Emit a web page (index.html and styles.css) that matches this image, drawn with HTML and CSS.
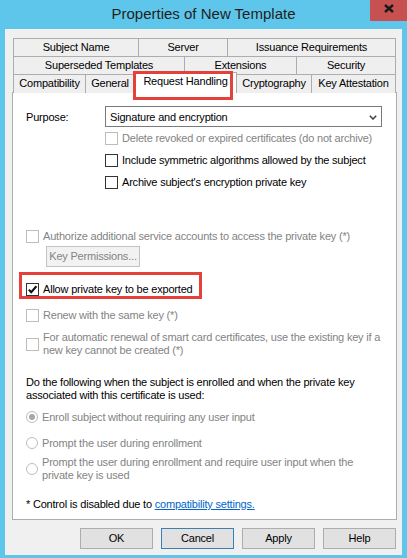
FILE: index.html
```html
<!DOCTYPE html>
<html>
<head>
<meta charset="utf-8">
<link rel="stylesheet" href="styles.css">
</head>
<body>
<div class="window">
  <div class="titlebar">
    <div class="title">Properties of New Template</div>
    <div class="close">
      <svg width="10" height="9" viewBox="0 0 10 9"><path d="M1 1 L9 8 M9 1 L1 8" stroke="#1a1a1a" stroke-width="2.4" fill="none"/></svg>
    </div>
  </div>
  <div class="dialog">
    <div class="tabs">
      <div class="tabrow">
        <div class="tab t-subject">Subject Name</div>
        <div class="tab t-server">Server</div>
        <div class="tab t-issuance">Issuance Requirements</div>
      </div>
      <div class="tabrow">
        <div class="tab t-superseded">Superseded Templates</div>
        <div class="tab t-extensions">Extensions</div>
        <div class="tab t-security">Security</div>
      </div>
      <div class="tabrow">
        <div class="tab t-compat">Compatibility</div>
        <div class="tab t-general">General</div>
        <div class="tab t-request selected">Request Handling</div>
        <div class="tab t-crypto">Cryptography</div>
        <div class="tab t-attest">Key Attestation</div>
      </div>
    </div>
    <div class="panel">
      <div class="purpose">
        <div class="label">Purpose:</div>
        <div class="select">
          <span>Signature and encryption</span>
          <svg width="8" height="5" viewBox="0 0 8 5"><path d="M0.8 0.8 L4 4 L7.2 0.8" stroke="#3c3c3c" stroke-width="1.5" fill="none"/></svg>
        </div>
      </div>
      <div class="opts">
        <div class="chk disabled"><span class="box"></span>Delete revoked or expired certificates (do not archive)</div>
        <div class="chk"><span class="box"></span>Include symmetric algorithms allowed by the subject</div>
        <div class="chk"><span class="box"></span>Archive subject's encryption private key</div>
      </div>
      <div class="line disabled authorize"><span class="box"></span>Authorize additional service accounts to access the private key (*)</div>
      <div class="keyperm">Key Permissions...</div>
      <div class="line allow"><span class="box checked"><svg width="11" height="11" viewBox="0 0 11 11"><path d="M1.8 5.6 L4.2 8.2 L9.4 2.2" stroke="#111" stroke-width="2.1" fill="none"/></svg></span>Allow private key to be exported</div>
      <div class="line disabled renew"><span class="box"></span>Renew with the same key (*)</div>
      <div class="multi disabled auto"><span class="box"></span><span class="txt">For automatic renewal of smart card certificates, use the existing key if a<br>new key cannot be created (*)</span></div>
      <div class="para">Do the following when the subject is enrolled and when the private key<br>associated with this certificate is used:</div>
      <div class="line disabled r1"><span class="radio on"></span>Enroll subject without requiring any user input</div>
      <div class="line disabled r2"><span class="radio"></span>Prompt the user during enrollment</div>
      <div class="multi disabled r3"><span class="radio"></span><span class="txt">Prompt the user during enrollment and require user input when the<br>private key is used</span></div>
      <div class="line note">* Control is disabled due to&nbsp;<a class="link">compatibility settings.</a></div>
    </div>
    <div class="buttons">
      <div class="btn">OK</div>
      <div class="btn default">Cancel</div>
      <div class="btn">Apply</div>
      <div class="btn">Help</div>
    </div>
    <div class="mark mark-tab"></div>
    <div class="mark mark-export"></div>
  </div>
</div>
</body>
</html>
```
FILE: styles.css
```css
* { box-sizing: border-box; }
html, body { margin: 0; padding: 0; }
body {
  width: 407px;
  height: 558px;
  overflow: hidden;
  background: #5ec6ea;
  font-family: "Liberation Sans", Arial, sans-serif;
  font-size: 11px;
  letter-spacing: -0.2px;
  color: #000;
}
.window { height: 558px; display: flex; flex-direction: column; }
.titlebar {
  height: 29px;
  display: grid;
  grid-template-columns: 1fr auto 1fr;
  align-items: start;
}
.title {
  grid-column: 2;
  font-size: 15px;
  letter-spacing: 0;
  line-height: 27px;
  color: #1e1e1e;
  white-space: nowrap;
}
.close {
  grid-column: 3;
  justify-self: end;
  width: 37px;
  height: 21px;
  background: #c75050;
  display: flex;
  justify-content: center;
  align-items: flex-start;
  padding-top: 4px;
  padding-left: 1px;
}
.close svg { display: block; }
.dialog {
  margin: 0 5px;
  height: 526px;
  background: #f0f0f0;
  position: relative;
  padding: 9px 0 0 7px;
}
.tabs { margin-left: 1px; width: 383px; }
.tabrow { display: flex; height: 18px; }
.tab {
  height: 19px;
  border: 1px solid #adadad;
  border-bottom: none;
  margin-left: -1px;
  background: #efefef;
  text-align: center;
  line-height: 17px;
  white-space: nowrap;
}
.tab:first-child { margin-left: 0; }
.t-subject { width: 126px; }
.t-server { width: 90px; }
.t-issuance { width: 169px; }
.t-superseded { width: 172px; }
.t-extensions { width: 113px; }
.t-security { width: 100px; }
.t-compat { width: 73px; }
.t-general { width: 50px; }
.t-request { width: 103px; }
.t-crypto { width: 76px; }
.t-attest { width: 85px; }
.tab.selected {
  position: relative;
  z-index: 2;
  height: 21px;
  margin-top: -2px;
  background: #fff;
  line-height: 17px;
}
.panel {
  width: 385px;
  height: 428px;
  border: 1px solid #adadad;
  background: #fff;
  padding: 0 0 0 13px;
}
.purpose {
  display: flex;
  align-items: center;
  height: 21px;
  margin-top: 13px;
}
.purpose .label { width: 79px; }
.select {
  width: 277px;
  height: 21px;
  border: 1px solid #7a7a7a;
  display: flex;
  align-items: center;
  justify-content: space-between;
  padding: 0 4px 0 4px;
}
.select svg { display: block; margin-top: 1px; }
.opts { margin-left: 79px; }
.chk, .line {
  display: flex;
  align-items: center;
  white-space: nowrap;
}
.chk { height: 22px; }
.line { height: 16px; }
.multi {
  display: flex;
  align-items: center;
  white-space: nowrap;
  line-height: 13px;
}
.box {
  flex: none;
  width: 13px;
  height: 13px;
  border: 1px solid #333;
  background: #fff;
  margin-right: 4px;
  display: flex;
  align-items: center;
  justify-content: center;
}
.box svg { display: block; }
.radio {
  flex: none;
  width: 12px;
  height: 12px;
  border: 1px solid #bcbcbc;
  border-radius: 50%;
  background: #fff;
  margin-right: 4px;
  display: flex;
  align-items: center;
  justify-content: center;
}
.radio.on::after {
  content: "";
  width: 6px;
  height: 6px;
  border-radius: 50%;
  background: #a8a8a8;
}
.disabled { color: #838383; }
.disabled .box { border-color: #bcbcbc; }
.authorize { margin-top: 35px; }
.keyperm {
  margin: 2px 0 0 20px;
  width: 94px;
  height: 21px;
  border: 1px solid #c2c2c2;
  background: #f2f2f2;
  color: #838383;
  text-align: center;
  line-height: 19px;
}
.allow { margin-top: 14px; }
.renew { margin-top: 10px; }
.auto { margin-top: 8px; }
.para { margin-top: 19px; line-height: 13px; white-space: nowrap; }
.r1 { margin-top: 7px; }
.r2 { margin-top: 10px; }
.r3 { margin-top: 5px; }
.note { margin-top: 14px; }
.link { color: #0066cc; text-decoration: underline; }
.buttons {
  display: flex;
  justify-content: flex-end;
  gap: 8px;
  margin-top: 8px;
  padding-right: 6px;
}
.btn {
  width: 73px;
  height: 21px;
  border: 1px solid #adadad;
  background: #e1e1e1;
  text-align: center;
  line-height: 19px;
}
.btn.default { border-color: #3c7fb1; }
.mark {
  position: absolute;
  border: 3px solid #e5413b;
  z-index: 5;
}
.mark-tab { left: 128px; top: 42px; width: 100px; height: 29px; }
.mark-export { left: 14px; top: 243px; width: 183px; height: 27px; }
```
